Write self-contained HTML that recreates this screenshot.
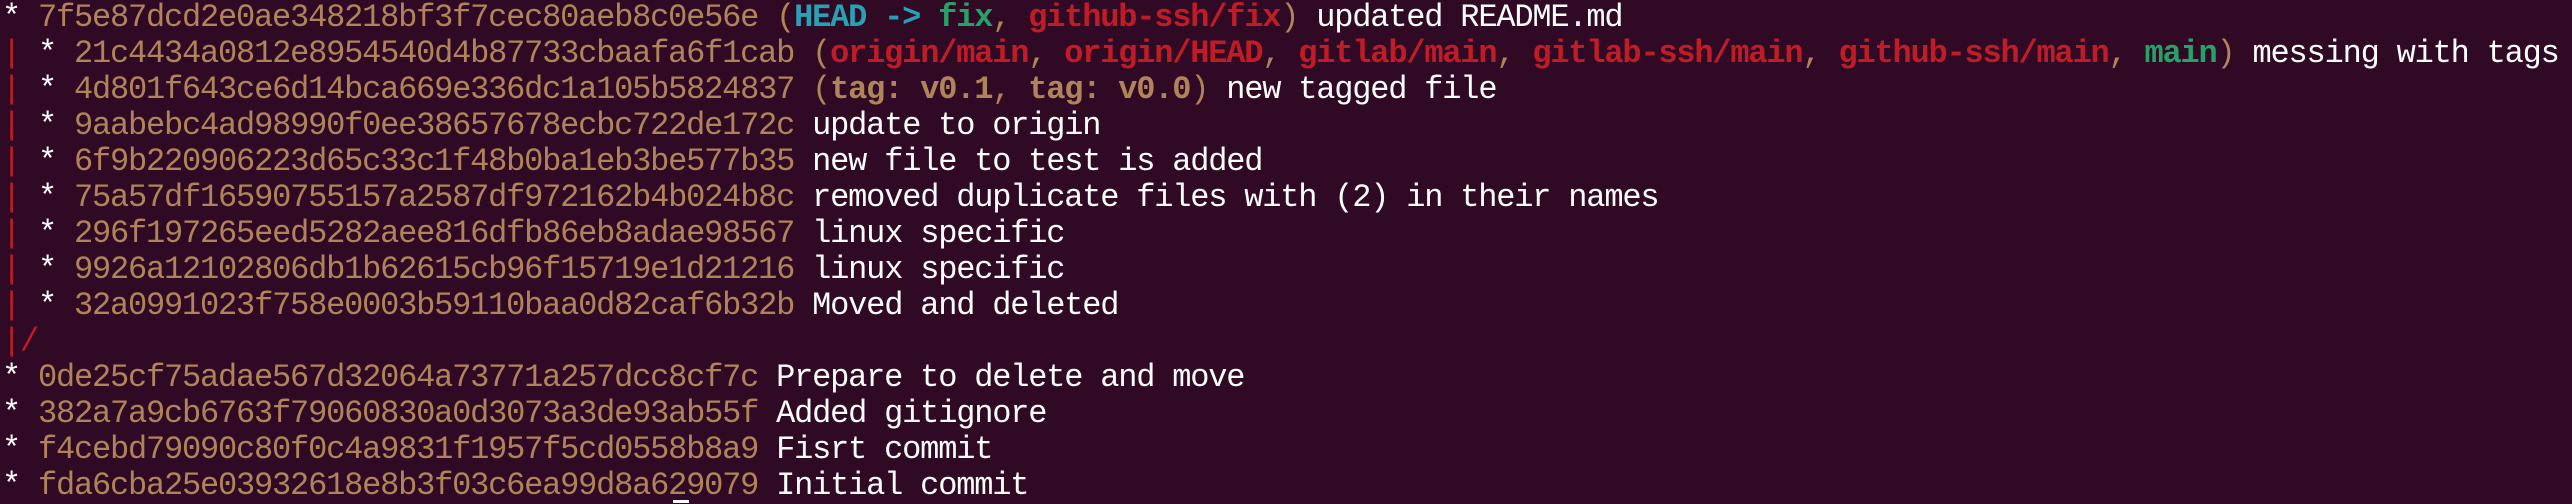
<!DOCTYPE html>
<html><head><meta charset="utf-8"><style>
html,body{margin:0;padding:0;background:#300a24;}
body{width:2572px;height:503px;overflow:hidden;position:relative;}
pre{margin:0;padding:0 0 0 2px;font-family:"Liberation Mono","DejaVu Sans Mono",monospace;font-size:32px;letter-spacing:-1.2px;line-height:36px;color:#ffffff;white-space:pre;}
.h{color:#b0845a}
.c{color:#2aa1b3;font-weight:bold}
.g{color:#26a269;font-weight:bold}
.r{color:#c01c28;font-weight:bold}
.y{color:#b0845a;font-weight:bold}
.l{color:#c01c28}
.cur{position:absolute;left:673px;top:500px;width:16px;height:3px;background:#fff}
</style></head><body><pre>* <span class="h">7f5e87dcd2e0ae348218bf3f7cec80aeb8c0e56e (</span><span class="c">HEAD -&gt; </span><span class="g">fix</span><span class="h">, </span><span class="r">github-ssh/fix</span><span class="h">)</span> updated README.md
<span class="l">|</span> * <span class="h">21c4434a0812e8954540d4b87733cbaafa6f1cab (</span><span class="r">origin/main</span><span class="h">, </span><span class="r">origin/HEAD</span><span class="h">, </span><span class="r">gitlab/main</span><span class="h">, </span><span class="r">gitlab-ssh/main</span><span class="h">, </span><span class="r">github-ssh/main</span><span class="h">, </span><span class="g">main</span><span class="h">)</span> messing with tags
<span class="l">|</span> * <span class="h">4d801f643ce6d14bca669e336dc1a105b5824837 (</span><span class="y">tag: v0.1</span><span class="h">, </span><span class="y">tag: v0.0</span><span class="h">)</span> new tagged file
<span class="l">|</span> * <span class="h">9aabebc4ad98990f0ee38657678ecbc722de172c</span> update to origin
<span class="l">|</span> * <span class="h">6f9b220906223d65c33c1f48b0ba1eb3be577b35</span> new file to test is added
<span class="l">|</span> * <span class="h">75a57df16590755157a2587df972162b4b024b8c</span> removed duplicate files with (2) in their names
<span class="l">|</span> * <span class="h">296f197265eed5282aee816dfb86eb8adae98567</span> linux specific
<span class="l">|</span> * <span class="h">9926a12102806db1b62615cb96f15719e1d21216</span> linux specific
<span class="l">|</span> * <span class="h">32a0991023f758e0003b59110baa0d82caf6b32b</span> Moved and deleted
<span class="l">|/</span>
* <span class="h">0de25cf75adae567d32064a73771a257dcc8cf7c</span> Prepare to delete and move
* <span class="h">382a7a9cb6763f79060830a0d3073a3de93ab55f</span> Added gitignore
* <span class="h">f4cebd79090c80f0c4a9831f1957f5cd0558b8a9</span> Fisrt commit
* <span class="h">fda6cba25e03932618e8b3f03c6ea99d8a629079</span> Initial commit</pre><div class="cur"></div></body></html>
